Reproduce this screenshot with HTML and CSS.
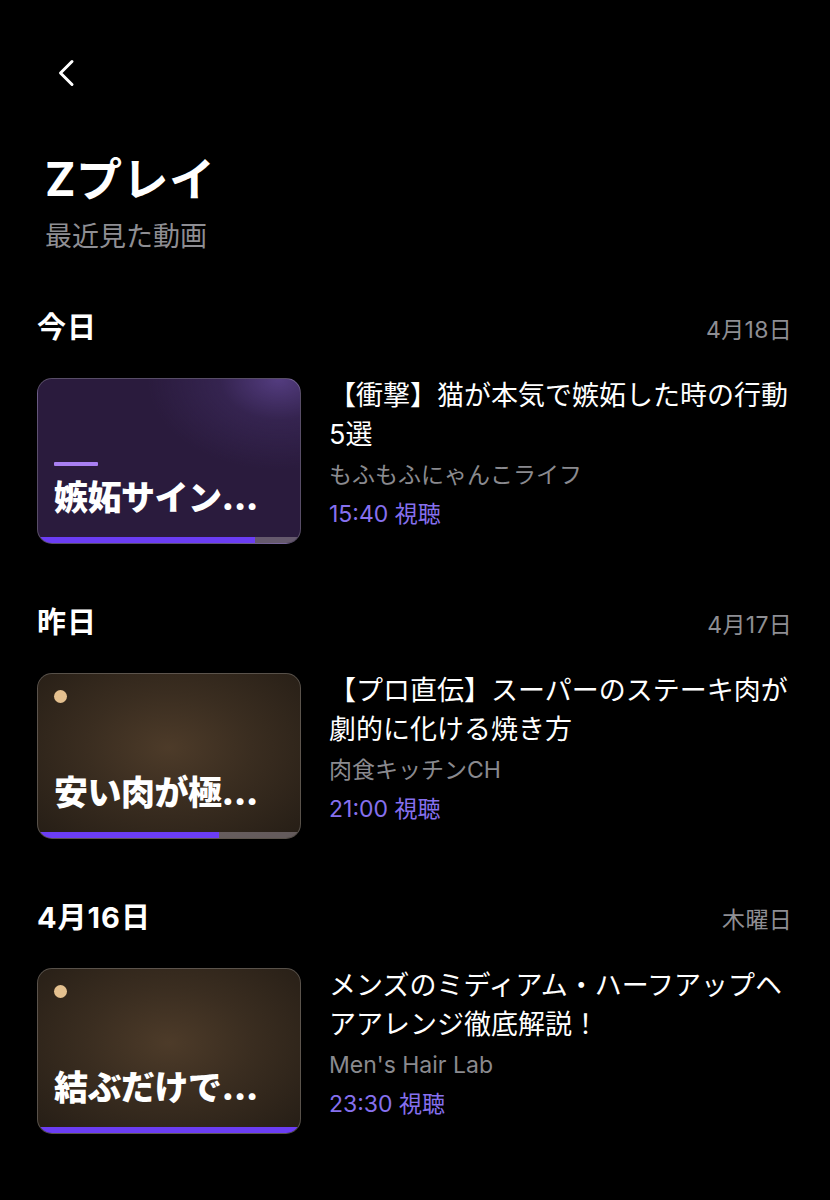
FILE: index.html
```html
<!DOCTYPE html>
<html lang="ja">
<head>
<meta charset="utf-8">
<title>Zプレイ</title>
<link rel="stylesheet" href="styles.css">
</head>
<body>
<div class="page">
  <div class="topbar">
    <svg class="back" width="18" height="28" viewBox="0 0 18 28" aria-hidden="true">
      <polyline points="15,2.5 3.5,14 15,25.5" fill="none" stroke="#fff" stroke-width="3" stroke-linecap="round" stroke-linejoin="round"/>
    </svg>
  </div>
  <div class="hero">
    <h1 class="title">Zプレイ</h1>
    <p class="subtitle">最近見た動画</p>
  </div>

  <section class="section first">
    <div class="sec-head">
      <h2 class="sec-title">今日</h2>
      <span class="sec-date">4月18日</span>
    </div>
    <div class="item">
      <div class="thumb purple">
        <div class="thumb-body">
          <span class="accent"></span>
          <span class="thumb-text">嫉妬サイン...</span>
        </div>
        <div class="progress"><div class="fill" style="width:83%"></div></div>
      </div>
      <div class="info">
        <div class="item-title">【衝撃】猫が本気で嫉妬した時の行動5選</div>
        <div class="channel">もふもふにゃんこライフ</div>
        <div class="watched">15:40 視聴</div>
      </div>
    </div>
  </section>

  <section class="section">
    <div class="sec-head">
      <h2 class="sec-title">昨日</h2>
      <span class="sec-date">4月17日</span>
    </div>
    <div class="item">
      <div class="thumb brown">
        <div class="thumb-body">
          <span class="dot"></span>
          <span class="thumb-text">安い肉が極...</span>
        </div>
        <div class="progress"><div class="fill" style="width:69%"></div></div>
      </div>
      <div class="info">
        <div class="item-title">【プロ直伝】スーパーのステーキ肉が劇的に化ける焼き方</div>
        <div class="channel">肉食キッチンCH</div>
        <div class="watched">21:00 視聴</div>
      </div>
    </div>
  </section>

  <section class="section">
    <div class="sec-head">
      <h2 class="sec-title">4月16日</h2>
      <span class="sec-date">木曜日</span>
    </div>
    <div class="item">
      <div class="thumb brown">
        <div class="thumb-body">
          <span class="dot"></span>
          <span class="thumb-text">結ぶだけで...</span>
        </div>
        <div class="progress"><div class="fill" style="width:100%"></div></div>
      </div>
      <div class="info">
        <div class="item-title">メンズのミディアム・ハーフアップヘアアレンジ徹底解説！</div>
        <div class="channel">Men's Hair Lab</div>
        <div class="watched">23:30 視聴</div>
      </div>
    </div>
  </section>
</div>
</body>
</html>
```

FILE: styles.css
```css
html, body {
  margin: 0;
  padding: 0;
  background: #000;
}
body {
  font-family: "Inter", "Noto Sans CJK JP", sans-serif;
  color: #fff;
}
.page {
  padding: 0 38px 0 37px;
}
.topbar {
  padding: 59px 0 0 20px;
  height: 28px;
}
.back {
  display: block;
}
.hero {
  padding-left: 8px;
  margin-top: 66px;
}
.title {
  margin: 0;
  font-size: 46px;
  line-height: 52px;
  font-weight: 700;
  letter-spacing: 0.5px;
}
.subtitle {
  margin: 14px 0 0;
  font-size: 27px;
  line-height: 36px;
  color: #8e8e93;
}
.section {
  margin-top: 59px;
}
.section.first {
  margin-top: 53px;
}
.sec-head {
  display: flex;
  justify-content: space-between;
  align-items: center;
  height: 40px;
}
.sec-title {
  margin: 0;
  font-size: 29px;
  font-weight: 700;
  line-height: 40px;
  letter-spacing: 1px;
}
.sec-date {
  font-size: 23px;
  color: #8e8e93;
  letter-spacing: 0.3px;
}
.item {
  display: flex;
  gap: 28px;
  margin-top: 30px;
  align-items: flex-start;
}
.thumb {
  flex: 0 0 264px;
  width: 264px;
  height: 166px;
  box-sizing: border-box;
  border: 1.5px solid rgba(255, 255, 255, 0.22);
  border-radius: 15px;
  overflow: hidden;
  display: flex;
  flex-direction: column;
}
.thumb.purple {
  background:
    radial-gradient(ellipse 50% 55% at 92% 0%, rgba(88, 64, 135, 0.9) 0%, rgba(66, 46, 102, 0.45) 45%, rgba(43, 28, 63, 0) 100%),
    #2a1b3d;
}
.thumb.brown {
  background: radial-gradient(ellipse 70% 75% at 50% 45%, #4d3b29 0%, #3a2d20 45%, #261e16 100%);
}
.thumb-body {
  flex: 1;
  display: flex;
  flex-direction: column;
  padding: 14px 16px 19px;
}
.accent {
  margin-top: auto;
  width: 44px;
  height: 4px;
  background: #a87ff2;
  border-radius: 1px;
  margin-bottom: 12px;
}
.dot {
  width: 13px;
  height: 13px;
  border-radius: 50%;
  background: #e4c08f;
  margin-top: 2px;
}
.thumb-text {
  margin-top: auto;
  font-size: 34px;
  font-weight: 900;
  line-height: 40px;
  color: #fff;
  white-space: nowrap;
  letter-spacing: -0.5px;
}
.accent + .thumb-text {
  margin-top: 0;
}
.progress {
  height: 6px;
  background: rgba(150, 140, 150, 0.55);
  flex: 0 0 6px;
}
.fill {
  height: 100%;
  background: #6b3df4;
}
.info {
  flex: 1;
  min-width: 0;
  margin-top: -2px;
}
.item-title {
  font-size: 27px;
  line-height: 39px;
  color: #fff;
}
.channel {
  margin-top: 2px;
  font-size: 23px;
  line-height: 39px;
  color: #8a8a8f;
}
.watched {
  font-size: 23px;
  line-height: 39px;
  color: #8670ee;
}
```
